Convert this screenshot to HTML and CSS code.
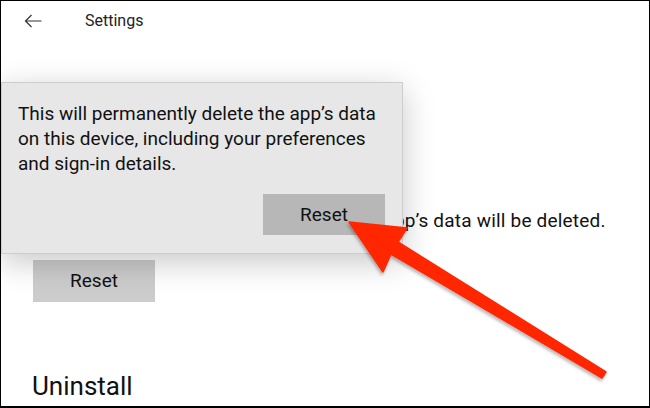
FILE: index.html
```html
<!DOCTYPE html>
<html lang="en">
<head>
    <meta charset="UTF-8">
    <meta name="viewport" content="width=device-width, initial-scale=1.0">
    <title>Settings</title>
    <link rel="stylesheet" href="styles.css">
</head>
<body>
    <div class="page">
        <div class="header">
            <svg class="back" width="18" height="14" viewBox="0 0 18 14">
                <path d="M17.5 7H1.5M7.5 1L1.5 7l6 6" fill="none" stroke="#333" stroke-width="1.2"/>
            </svg>
            <span class="title">Settings</span>
        </div>

        <div class="content">
            <p class="desc">If this app isn’t working right, reset it. The app’s data will be deleted.</p>
            <button class="btn">Reset</button>
            <h2 class="section">Uninstall</h2>
        </div>

        <!-- Flyout di conferma -->
        <div class="flyout">
            <p class="flyout-text">This will permanently delete the app’s data<br>on this device, including your preferences<br>and sign-in details.</p>
            <div class="flyout-actions">
                <button class="btn btn-dark">Reset</button>
            </div>
        </div>

        <!-- Freccia rossa -->
        <svg class="arrow" width="650" height="408" viewBox="0 0 650 408">
            <defs>
                <filter id="ombra" x="-20%" y="-20%" width="140%" height="140%">
                    <feDropShadow dx="-1" dy="2.5" stdDeviation="1.8" flood-color="#000" flood-opacity="0.28"/>
                </filter>
            </defs>
            <polygon points="349,222 407,228 398,242 606,372 602,378 391,254 383,272" fill="#ff2600" stroke="#ff2600" stroke-width="1.5" stroke-linejoin="round" filter="url(#ombra)"/>
        </svg>
    </div>
</body>
</html>
```

FILE: styles.css
```css
/* Stile pagina */
body {
    margin: 0;
    font-family: 'Roboto', sans-serif;
    color: #111;
}

.page {
    position: relative;
    width: 650px;
    height: 408px;
    box-sizing: border-box;
    border: 1px solid #000;
    border-bottom-width: 2px;
    background: #fff;
    overflow: hidden;
}

.header {
    display: flex;
    align-items: center;
    height: 40px;
    padding-left: 23px;
    gap: 43px;
}

.title {
    font-size: 16px;
    line-height: 20px;
    color: #222;
}

.content {
    padding-left: 31px;
}

.desc {
    margin: 168px 0 0;
    font-size: 19px;
    line-height: 24px;
    letter-spacing: 0.2px;
    text-indent: -8px;
    white-space: nowrap;
}

.btn {
    display: block;
    width: 122px;
    height: 42px;
    margin: 27px 0 0 1px;
    padding: 0;
    border: none;
    background-color: #cccccc;
    font-family: 'Roboto', sans-serif;
    font-size: 19px;
    line-height: 42px;
    color: #111;
}

.section {
    margin: 69px 0 0;
    font-size: 26px;
    font-weight: normal;
    line-height: 30px;
}

/* Flyout */
.flyout {
    position: absolute;
    left: 0;
    top: 81px;
    width: 402px;
    height: 172px;
    box-sizing: border-box;
    padding: 18px 17px 17px 16px;
    background-color: #e7e7e7;
    border: 1px solid #cdcdcd;
    box-shadow: 0 8px 30px rgba(0, 0, 0, 0.22);
}

.flyout-text {
    margin: 0;
    font-size: 19px;
    line-height: 25px;
    white-space: nowrap;
}

.flyout-actions {
    display: flex;
    justify-content: flex-end;
    margin-top: 18px;
}

.flyout-actions .btn {
    margin: 0;
    height: 41px;
    line-height: 41px;
}

.btn-dark {
    background-color: #b7b7b7;
}

.arrow {
    position: absolute;
    left: -1px;
    top: -1px;
    pointer-events: none;
}
```
